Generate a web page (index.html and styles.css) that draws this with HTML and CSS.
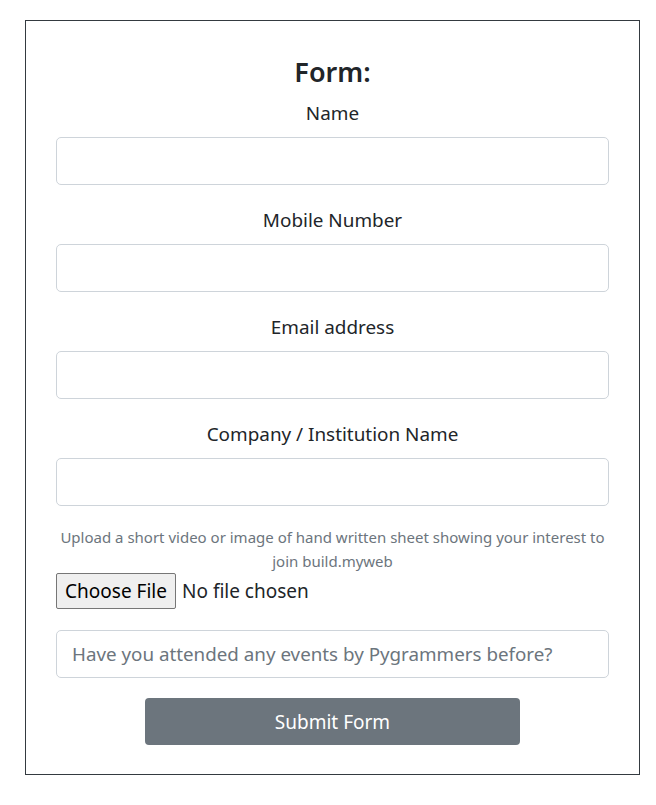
FILE: index.html
```html
<!DOCTYPE html>
<html>
<head>
<meta charset="utf-8">
<link rel="stylesheet" href="styles.css">
</head>
<body>
<form class="card">
  <h3 class="title">Form:</h3>
  <div class="group">
    <label class="label">Name</label>
    <input class="field" type="text">
  </div>
  <div class="group">
    <label class="label">Mobile Number</label>
    <input class="field" type="text">
  </div>
  <div class="group">
    <label class="label">Email address</label>
    <input class="field" type="text">
  </div>
  <div class="group group-last">
    <label class="label">Company / Institution Name</label>
    <input class="field" type="text">
  </div>
  <p class="hint">Upload a short video or image of hand written sheet showing your interest to join build.myweb</p>
  <input class="file" type="file">
  <input class="field field-q" type="text" placeholder="Have you attended any events by Pygrammers before?">
  <div class="actions">
    <button class="submit" type="button">Submit Form</button>
  </div>
</form>
</body>
</html>
```
FILE: styles.css
```css
* { box-sizing: border-box; }
body {
  margin: 0;
  background: #fff;
  font-family: "Noto Sans", "Open Sans", sans-serif;
  color: #212529;
}
.card {
  margin: 20px 0 0 25px;
  width: 615px;
  border: 1px solid #343a40;
  padding: 34px 30px 29px 30px;
  display: flex;
  flex-direction: column;
}
.title {
  margin: 0 0 11px;
  text-align: center;
  font-size: 27px;
  line-height: 34px;
  font-weight: 600;
}
.group {
  display: flex;
  flex-direction: column;
  margin-bottom: 22px;
}
.group-last { margin-bottom: 19px; }
.label {
  text-align: center;
  font-size: 18.9px;
  line-height: 27px;
  margin-bottom: 10px;
}
.field {
  height: 48px;
  width: 100%;
  border: 1px solid #ced4da;
  border-radius: 5px;
  padding: 0 15px;
  font-family: inherit;
  font-size: 18.8px;
  color: #495057;
  background: #fff;
}
.field::placeholder { color: #6c757d; }
.hint {
  margin: 0;
  text-align: center;
  color: #6c757d;
  font-size: 15px;
  line-height: 24px;
}
.file {
  height: 36px;
  font-family: inherit;
  font-size: 19px;
  color: #212529;
  margin: 0 0 21px;
}
.file::file-selector-button {
  height: 36px;
  width: 120px;
  margin-right: 6px;
  font-family: inherit;
  font-size: 19px;
  color: #000;
  background: #efefef;
  border: 1px solid #767676;
  border-radius: 2px;
  padding: 0 6px;
}
.actions {
  display: flex;
  justify-content: center;
  margin-top: 20px;
}
.submit {
  width: 375px;
  height: 47px;
  border: none;
  border-radius: 4px;
  background: #6c757d;
  color: #fff;
  font-family: inherit;
  font-size: 19px;
}
```
